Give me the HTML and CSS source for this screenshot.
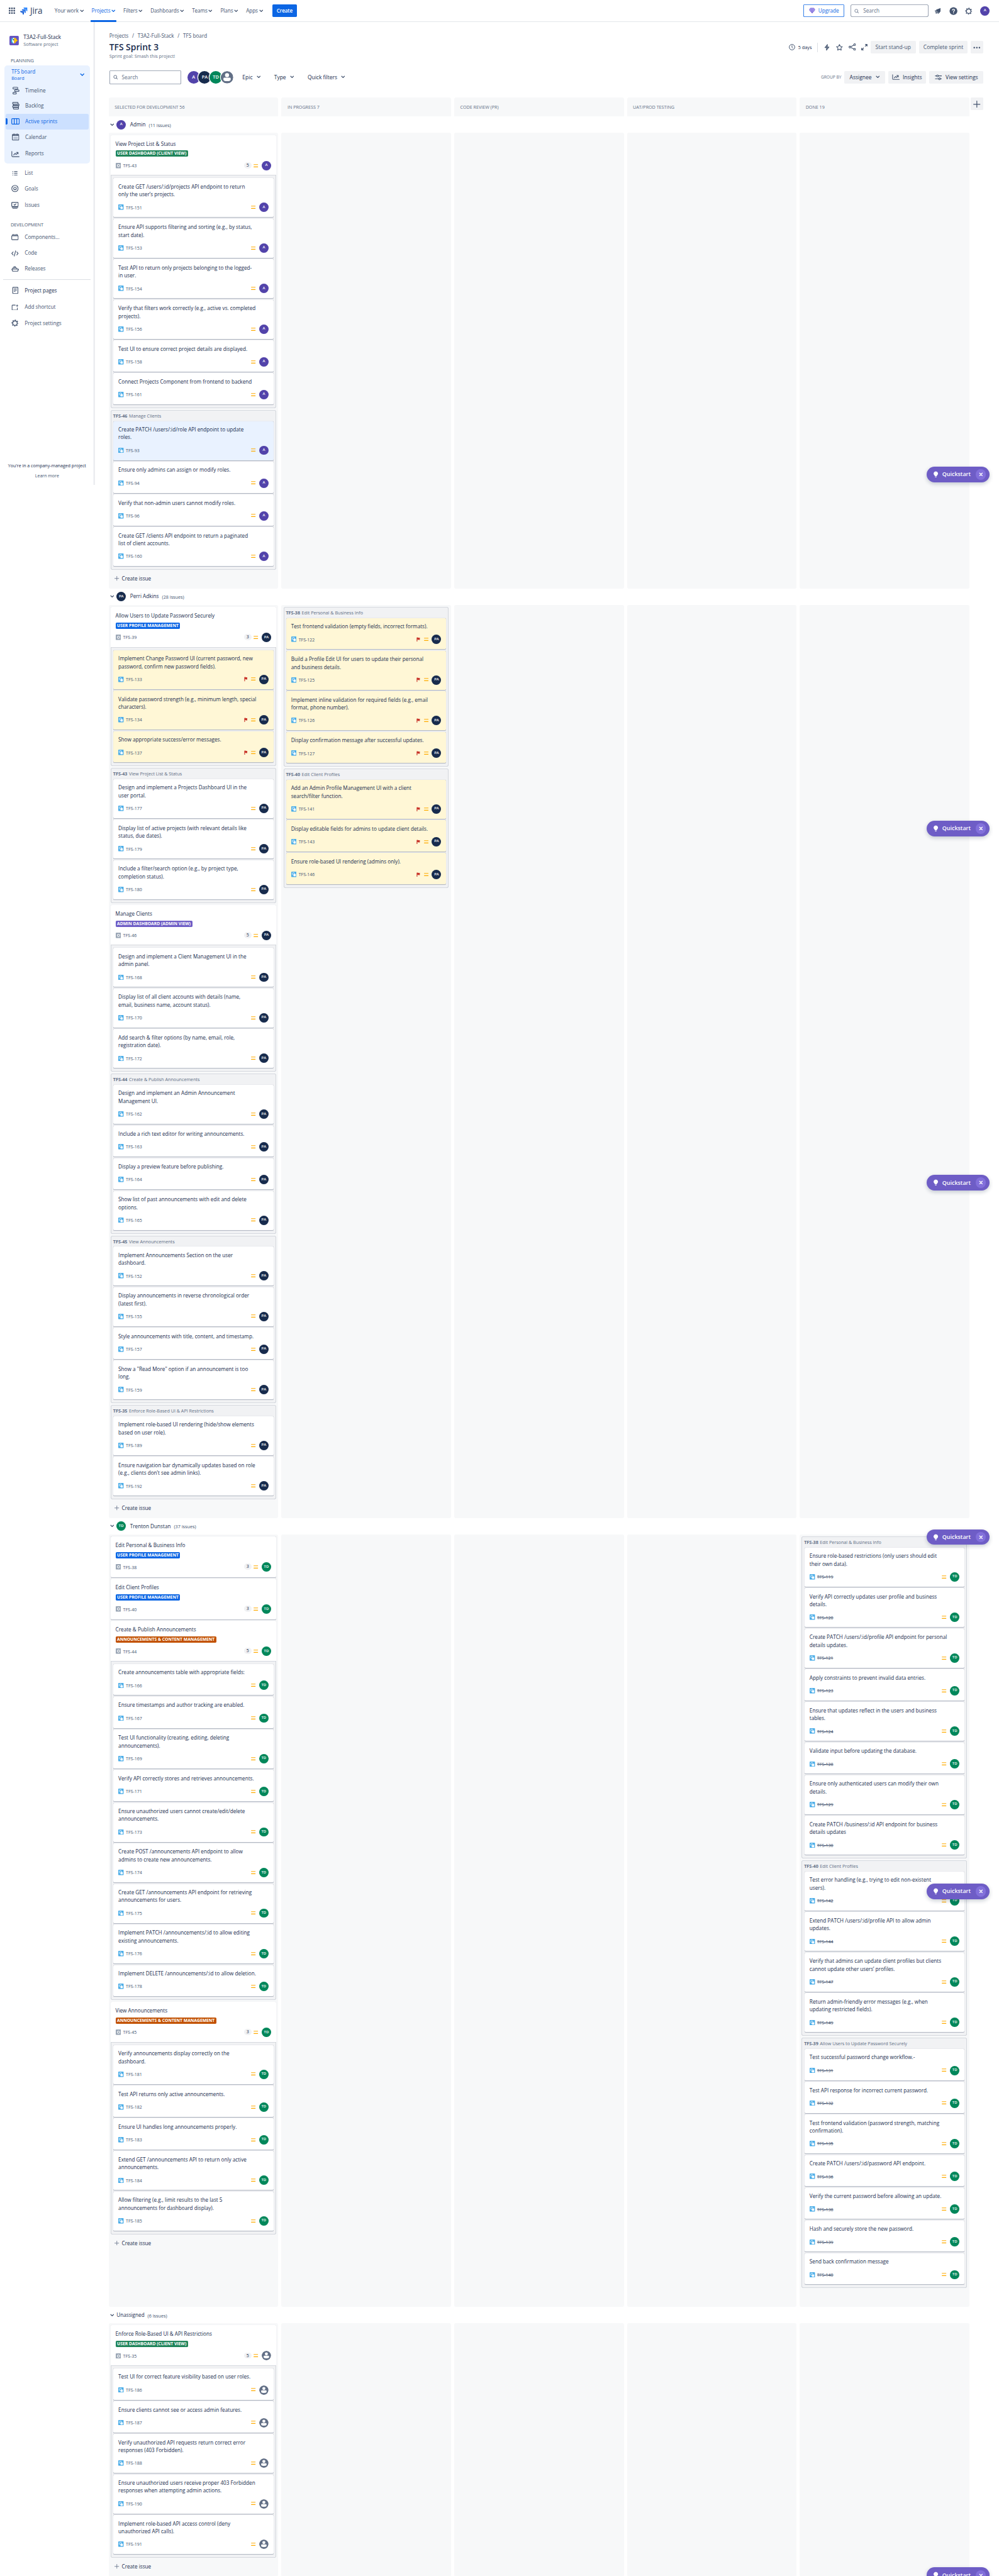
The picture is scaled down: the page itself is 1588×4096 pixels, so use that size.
FILE: index.html
```html
<!DOCTYPE html>
<html lang="en">
<head>
<meta charset="utf-8">
<title>TFS board - Active sprints - Jira</title>
<link rel="stylesheet" href="styles.css">
</head>
<body>
<svg class="sprite" aria-hidden="true">
  <symbol id="i-grid" viewBox="0 0 12 12"><g fill="currentColor"><rect width="3" height="3" rx=".7"/><rect x="4.5" width="3" height="3" rx=".7"/><rect x="9" width="3" height="3" rx=".7"/><rect y="4.5" width="3" height="3" rx=".7"/><rect x="4.5" y="4.5" width="3" height="3" rx=".7"/><rect x="9" y="4.5" width="3" height="3" rx=".7"/><rect y="9" width="3" height="3" rx=".7"/><rect x="4.5" y="9" width="3" height="3" rx=".7"/><rect x="9" y="9" width="3" height="3" rx=".7"/></g></symbol>
  <symbol id="i-jira" viewBox="0 0 14 14"><path fill="#2684ff" d="M6.6 0H14v7.2c-1.6 0-2.7-1.200-2.700-2.600V2.900H9.500C7.900 2.900 6.600 1.600 6.600 0z"/><path fill="#2271e8" d="M3.300 3.400h7.300v7.200c-1.600 0-2.700-1.200-2.700-2.700V6.200H6.200c-1.600 0-2.900-1.200-2.900-2.800z"/><path fill="#1d63d8" d="M0 6.800h7.300V14c-1.600 0-2.800-1.200-2.800-2.700V9.600H2.900C1.300 9.600 0 8.400 0 6.800z"/></symbol>
  <symbol id="i-chev" viewBox="0 0 8 8"><path d="M1.300 2.700 4 5.300l2.700-2.600" fill="none" stroke="currentColor" stroke-width="1.500" stroke-linecap="round" stroke-linejoin="round"/></symbol>
  <symbol id="i-gem" viewBox="0 0 12 12"><path d="M2.600 1.200h6.800L11.300 4.500 6 10.900.7 4.500z" fill="#b8acf6" stroke="#8270db" stroke-width="1.200" stroke-linejoin="round"/><path d="M.7 4.500h10.600M4 1.200v3.300L6 10.500l2-6V1.200M2 7h8M6 1.200v9.300" fill="none" stroke="#8270db" stroke-width=".8"/></symbol>
  <symbol id="i-search" viewBox="0 0 12 12"><circle cx="5.200" cy="5.200" r="3.900" fill="none" stroke="currentColor" stroke-width="1.300"/><path d="m8.200 8.200 3 3" stroke="currentColor" stroke-width="1.400" stroke-linecap="round"/></symbol>
  <symbol id="i-bell" viewBox="0 0 12 12"><path d="M11.300.8c.5 2.200.6 4.600-.5 6.700L8.300 10.800 1.500 5.500C3.300 2.900 7.500 3 11.300.8z" fill="currentColor"/><path d="M.4 6.300 6.900 11.200" stroke="currentColor" stroke-width="1.400" stroke-linecap="round"/><path d="M1.600 8.800a1.700 1.700 0 0 0 2.800 2.100z" fill="currentColor"/></symbol>
  <symbol id="i-help" viewBox="0 0 16 16"><circle cx="8" cy="8" r="7.500" fill="currentColor"/><path d="M5.900 6.300C5.900 5 6.900 4.300 8 4.300s2.200.7 2.200 1.900c0 1.500-2.100 1.600-2.100 3.100" fill="none" stroke="#fff" stroke-width="1.500" stroke-linecap="round"/><circle cx="8.100" cy="11.600" r="1" fill="#fff"/></symbol>
  <symbol id="i-gear" viewBox="0 0 14 14"><circle cx="7" cy="7" r="4.300" fill="none" stroke="currentColor" stroke-width="1.600"/><circle cx="7" cy="7" r="5.700" fill="none" stroke="currentColor" stroke-width="1.800" stroke-dasharray="2.100 2.377" stroke-dashoffset="1"/></symbol>
  <symbol id="i-clock" viewBox="0 0 12 12"><circle cx="6" cy="6" r="5.300" fill="none" stroke="currentColor" stroke-width="1.200"/><path d="M6 3v3.300l1.400 1.600" fill="none" stroke="currentColor" stroke-width="1.200" stroke-linecap="round"/></symbol>
  <symbol id="i-bolt" viewBox="0 0 10 12"><path d="M5.800.7 1.200 6.400h3.200L4 11.300l4.800-5.900H5.500z" fill="currentColor" fill-opacity=".75" stroke="currentColor" stroke-width="1.100" stroke-linejoin="round"/></symbol>
  <symbol id="i-star" viewBox="0 0 12 12"><path d="m6 .9 1.600 3.300 3.600.5-2.600 2.500.6 3.600L6 9.100l-3.200 1.700.6-3.600L.8 4.700l3.600-.5z" fill="none" stroke="currentColor" stroke-width="1.200" stroke-linejoin="round"/></symbol>
  <symbol id="i-share" viewBox="0 0 13 13"><g fill="none" stroke="currentColor" stroke-width="1.300"><circle cx="2.300" cy="6.500" r="1.600"/><circle cx="10.700" cy="2.300" r="1.600"/><circle cx="10.700" cy="10.700" r="1.600"/><path d="m3.800 5.800 5.400-2.700M3.800 7.200l5.400 2.700"/></g></symbol>
  <symbol id="i-expand" viewBox="0 0 12 12"><g fill="none" stroke="currentColor" stroke-width="1.500" stroke-linejoin="round"><path d="M7.500.8h3.700v3.700M11 1 7.300 4.700M4.500 11.200H.8V7.500M1 11l3.700-3.700"/></g></symbol>
  <symbol id="i-dots" viewBox="0 0 14 4"><g fill="currentColor"><circle cx="2" cy="2" r="1.500"/><circle cx="7" cy="2" r="1.500"/><circle cx="12" cy="2" r="1.500"/></g></symbol>
  <symbol id="i-chart" viewBox="0 0 16 12"><g fill="none" stroke="currentColor" stroke-width="1.400" stroke-linecap="round" stroke-linejoin="round"><path d="M1 1v8.500q0 1.500 1.500 1.500H15"/><path d="m4.500 7.800 2.800-3 2 2 3.400-3.600M9.700 2.700h3.200v3.100"/></g></symbol>
  <symbol id="i-sliders" viewBox="0 0 14 12"><g fill="none" stroke="currentColor" stroke-width="1.300" stroke-linecap="round"><path d="M1 3.200h2.200M7 3.200h6M1 8.800h6M11 8.800h2"/><circle cx="5.100" cy="3.200" r="1.700"/><circle cx="9" cy="8.800" r="1.700"/></g></symbol>
  <symbol id="i-plus" viewBox="0 0 14 14"><path d="M7 .8v12.400M.8 7h12.400" stroke="currentColor" stroke-width="1.500" stroke-linecap="round"/></symbol>
  <symbol id="i-timeline" viewBox="0 0 16 16"><g fill="none" stroke="currentColor" stroke-width="1.500"><rect x="2" y="1" width="10" height="3.500" rx="1.700"/><rect x="5.500" y="6.200" width="9" height="3.500" rx="1.700"/><rect x="2" y="11.500" width="7" height="3.300" rx="1.600"/></g></symbol>
  <symbol id="i-backlog" viewBox="0 0 16 16"><g fill="none" stroke="currentColor" stroke-width="1.500"><rect x="1.500" y="1.200" width="11" height="3.400" rx="1"/><rect x="3" y="4.600" width="11.500" height="3.400" rx="1"/><rect x="1.500" y="8" width="12" height="3.400" rx="1"/><rect x="3" y="11.400" width="10.500" height="3.400" rx="1"/></g></symbol>
  <symbol id="i-board" viewBox="0 0 16 12"><g fill="none" stroke="currentColor" stroke-width="1.500"><rect x=".8" y=".8" width="14.400" height="10.400" rx="1.500"/><path d="M5.600 1v10M10.400 1v10"/></g></symbol>
  <symbol id="i-calendar" viewBox="0 0 14 14"><rect x=".8" y="2" width="12.400" height="11.200" rx="1.200" fill="none" stroke="currentColor" stroke-width="1.400"/><path d="M1 4h12M4 .5v2.500M10 .5v2.500" stroke="currentColor" stroke-width="1.600"/><path d="M3.500 7.600h1.600m1.100 0h1.600m1.100 0h1.600M3.500 10.500h1.600m1.100 0h1.600m1.100 0h1.600" stroke="currentColor" stroke-width="1.300"/></symbol>
  <symbol id="i-list" viewBox="0 0 12 12"><path d="M1 2.500h1.500M4.500 2.500h7M1 6h1.500M4.500 6h7M1 9.500h1.500M4.500 9.500h7" stroke="currentColor" stroke-width="1.400"/></symbol>
  <symbol id="i-goal" viewBox="0 0 14 14"><g fill="none" stroke="currentColor" stroke-width="1.400"><circle cx="7" cy="7" r="6.100"/><circle cx="7" cy="7" r="2.500"/></g></symbol>
  <symbol id="i-issues" viewBox="0 0 14 14"><g fill="none" stroke="currentColor" stroke-width="1.500"><rect x=".8" y="1" width="12.400" height="7.800" rx="1"/><path d="m4.800 4.800 1.700 1.500 2.800-2.800M1 10.800h12M2.500 13.100h9" stroke-width="1.400"/></g></symbol>
  <symbol id="i-comp" viewBox="0 0 14 12"><g fill="none" stroke="currentColor" stroke-width="1.400"><rect x=".8" y="3.500" width="12.400" height="7.600" rx="1"/><path d="M2.500 3.500V1.200h3.200v2.300M8.300 3.500V1.200h3.200v2.300"/></g></symbol>
  <symbol id="i-code" viewBox="0 0 14 12"><path d="M3.500 3.200.9 6l2.600 2.800M10.500 3.200 13.100 6l-2.600 2.800M8.200 1 5.800 11" fill="none" stroke="currentColor" stroke-width="1.400" stroke-linecap="round" stroke-linejoin="round"/></symbol>
  <symbol id="i-ship" viewBox="0 0 15 11"><g fill="none" stroke="currentColor" stroke-width="1.400" stroke-linejoin="round"><path d="M1 6h13l-1.800 4H2.600zM2.800 6V3.600h7.400L11.500 6M5 3.400V1.200h2.800v2.200"/></g></symbol>
  <symbol id="i-page" viewBox="0 0 12 14"><rect x="1" y="1" width="10" height="12" rx="1" fill="none" stroke="currentColor" stroke-width="1.400"/><path d="M3.300 4.200h5.400M3.300 6.600h5.400M3.300 9h3" stroke="currentColor" stroke-width="1.200"/></symbol>
  <symbol id="i-shortcut" viewBox="0 0 14 13"><path d="M8 1.500H2q-1 0-1 1V11q0 1 1 1h9q1 0 1-1V7" fill="none" stroke="currentColor" stroke-width="1.400"/><path d="M11.500.5v4.400M9.300 2.700h4.400" stroke="currentColor" stroke-width="1.300"/></symbol>
  <symbol id="i-project" viewBox="0 0 18 18"><rect width="18" height="18" rx="2" fill="#6554c0"/><path d="M9 3.500a5.500 5.500 0 0 0 0 11z" fill="#fff"/><path d="M8 3.600a5.500 5.500 0 0 0 0 10.800A8 8 0 0 1 5 9a8 8 0 0 1 3-5.400z" fill="#00b8d9"/><path d="M9 3.500c3 0 4.600 1.800 5 4.200l2.200 1.600L13 11c-.7 2.300-2.200 3.500-4 3.500z" fill="#ffc400"/><circle cx="7.700" cy="7.700" r="1.200" fill="#253858"/></symbol>
  <symbol id="i-story" viewBox="0 0 10 10"><rect width="10" height="10" rx="1" fill="#9aa6b5"/><circle cx="5" cy="5" r="2.200" fill="none" stroke="#fff" stroke-width="1.200"/></symbol>
  <symbol id="i-sub" viewBox="0 0 10 10"><rect width="10" height="10" rx="1" fill="#4bade8"/><rect x="2.100" y="2.100" width="3.800" height="3.800" rx=".5" fill="none" stroke="#fff" stroke-width=".9"/><rect x="4.200" y="4.200" width="4.100" height="4.100" rx=".5" fill="#fff"/></symbol>
  <symbol id="i-prio" viewBox="0 0 9 9"><path d="M.2 2.100h8.600M.2 6.500h8.600" stroke="#ffab00" stroke-width="1.300"/></symbol>
  <symbol id="i-flag" viewBox="0 0 7 9"><path d="M.4 1q1.600-.7 3 0t3.200 0v4.200q-1.600.7-3 0-.9-.4-1.800-.1V9H.4z" fill="#c9372c"/></symbol>
  <symbol id="i-person" viewBox="0 0 24 24"><circle cx="12" cy="12" r="12" fill="#626f86"/><circle cx="12" cy="7.800" r="3.900" fill="#fff"/><path d="M5 14.500q0-1.800 1.800-1.800h10.400q1.800 0 1.800 1.800v1.700q0 3-7 3.200-7-.2-7-3.200z" fill="#fff"/></symbol>
  <symbol id="i-bulb" viewBox="0 0 12 14"><path d="M6 .6a4.700 4.700 0 0 0-2.600 8.600q.5.400.6 1.200h4q.1-.8.600-1.200A4.700 4.700 0 0 0 6 .6zM4.200 11.400h3.600v.8q0 1-1.800 1t-1.800-1z" fill="#fff"/></symbol>
  <symbol id="i-close" viewBox="0 0 8 8"><path d="m1.500 1.500 5 5m0-5-5 5" stroke="#fff" stroke-width="1.600" stroke-linecap="round"/></symbol>
</svg>

<div class="app">
  <header class="topbar">
    <svg class="ic-switch"><use href="#i-grid"/></svg>
    <a class="brand"><svg><use href="#i-jira"/></svg>Jira</a>
    <nav class="topnav">
      <a>Your work<svg><use href="#i-chev"/></svg></a>
      <a class="is-current">Projects<svg><use href="#i-chev"/></svg></a>
      <a>Filters<svg><use href="#i-chev"/></svg></a>
      <a>Dashboards<svg><use href="#i-chev"/></svg></a>
      <a>Teams<svg><use href="#i-chev"/></svg></a>
      <a>Plans<svg><use href="#i-chev"/></svg></a>
      <a>Apps<svg><use href="#i-chev"/></svg></a>
    </nav>
    <button class="create">Create</button>
    <div class="topright">
      <button class="upgrade"><svg><use href="#i-gem"/></svg>Upgrade</button>
      <div class="topsearch"><svg><use href="#i-search"/></svg>Search</div>
      <svg class="ic-bell"><use href="#i-bell"/></svg>
      <svg class="ic-help"><use href="#i-help"/></svg>
      <svg class="ic-gear"><use href="#i-gear"/></svg>
      <span class="avatar a">A</span>
    </div>
  </header>

  <div class="body">
    <aside class="sidebar">
      <div class="project">
        <svg><use href="#i-project"/></svg>
        <div><b>T3A2-Full-Stack</b><span>Software project</span></div>
      </div>
      <h3 class="planning">PLANNING</h3>
      <div class="panel">
        <div class="panel-head"><div><b>TFS board</b><span>Board</span></div><svg><use href="#i-chev"/></svg></div>
        <a class="item"><i><svg class="s15"><use href="#i-timeline"/></svg></i>Timeline</a>
        <a class="item"><i><svg class="s15"><use href="#i-backlog"/></svg></i>Backlog</a>
        <a class="item active"><i><svg class="s16x12"><use href="#i-board"/></svg></i>Active sprints</a>
        <a class="item"><i><svg><use href="#i-calendar"/></svg></i>Calendar</a>
        <a class="item sp2"><i><svg class="s16x12"><use href="#i-chart"/></svg></i>Reports</a>
      </div>
      <a class="item out sp3"><i><svg class="s11"><use href="#i-list"/></svg></i>List</a>
      <a class="item out"><i><svg><use href="#i-goal"/></svg></i>Goals</a>
      <a class="item out sp2"><i><svg><use href="#i-issues"/></svg></i>Issues</a>
      <h3 class="dev">DEVELOPMENT</h3>
      <a class="item out sp2"><i><svg class="s14x12"><use href="#i-comp"/></svg></i>Components...</a>
      <a class="item out sp1"><i><svg class="s14x12"><use href="#i-code"/></svg></i>Code</a>
      <a class="item out"><i><svg class="s15x11"><use href="#i-ship"/></svg></i>Releases</a>
      <hr>
      <a class="item out dark"><i><svg class="s12x15"><use href="#i-page"/></svg></i>Project pages</a>
      <a class="item out sp2"><i><svg class="s14x12"><use href="#i-shortcut"/></svg></i>Add shortcut</a>
      <a class="item out sp1"><i><svg><use href="#i-gear"/></svg></i>Project settings</a>
      <div class="side-foot"><p>You're in a company-managed project</p><a>Learn more</a></div>
    </aside>

    <main>
      <div class="heading">
        <div>
          <div class="crumbs"><span>Projects</span><span>/</span><span>T3A2-Full-Stack</span><span>/</span><span>TFS board</span></div>
          <h1>TFS Sprint 3</h1>
          <p class="goal">Sprint goal: Smash this project!</p>
        </div>
        <div class="actions">
          <svg class="w12"><use href="#i-clock"/></svg><span class="days">5 days</span><span class="vr"></span>
          <svg class="bolt"><use href="#i-bolt"/></svg><svg class="w13"><use href="#i-star"/></svg><svg class="w14"><use href="#i-share"/></svg><svg class="w12 expand"><use href="#i-expand"/></svg>
          <button class="btn standup">Start stand-up</button><button class="btn complete">Complete sprint</button><button class="btn more"><svg><use href="#i-dots"/></svg></button>
        </div>
      </div>
      <div class="toolbar">
        <div class="search"><svg><use href="#i-search"/></svg>Search</div>
        <div class="people"><span class="avatar a">A</span><span class="avatar pa">PA</span><span class="avatar td">TD</span><svg class="avatar"><use href="#i-person"/></svg></div>
        <span class="filter">Epic<svg><use href="#i-chev"/></svg></span>
        <span class="filter">Type<svg><use href="#i-chev"/></svg></span>
        <span class="filter">Quick filters<svg><use href="#i-chev"/></svg></span>
        <div class="tools">
          <span class="groupby">GROUP BY</span>
          <button class="btn assignee">Assignee<svg><use href="#i-chev"/></svg></button>
          <button class="btn insights"><svg><use href="#i-chart"/></svg>Insights</button>
          <button class="btn settings"><svg><use href="#i-sliders"/></svg>View settings</button>
        </div>
      </div>
      <div class="board-head">
        <div class="cols">
          <div class="col-title">SELECTED FOR DEVELOPMENT 56</div>
          <div class="col-title">IN PROGRESS 7</div>
          <div class="col-title">CODE REVIEW (PR)</div>
          <div class="col-title">UAT/PROD TESTING</div>
          <div class="col-title">DONE 19</div>
        </div>
        <button class="btn addcol"><svg><use href="#i-plus"/></svg></button>
      </div>
      <div id="lanes"></div>
    </main>
  </div>

  <div class="quick q1"></div><div class="quick q2"></div><div class="quick q3"></div><div class="quick q4"></div><div class="quick q5"></div><div class="quick q6"></div>
</div>
<script src="board.js"></script>
</body>
</html>
```
FILE: styles.css
```css
* { box-sizing: border-box; }
body { margin: 0; background: #fff; overflow: hidden; }
.sprite { position: absolute; width: 0; height: 0; }
svg { display: block; flex: none; }
p, h1, h3 { margin: 0; }
button { border: 0; padding: 0; margin: 0; font: inherit; color: inherit; }

.app {
  position: relative;
  zoom: 0.82708;
  width: 1920px;
  height: 4953px;
  overflow: hidden;
  background: #fff;
  color: #172b4d;
  font: 9.9px/15px "Open Sans", "Noto Sans", sans-serif;
}

/* top navigation */
.topbar {
  display: flex;
  align-items: center;
  height: 42px;
  padding: 0 18px 0 17px;
  box-shadow: inset 0 -1px #dcdfe4;
  color: #44546f;
}
.ic-switch { width: 12px; height: 12px; }
.brand { display: flex; align-items: center; gap: 5px; width: 66px; margin-left: 10px; font-size: 16.5px; font-weight: 500; letter-spacing: -.2px; color: #344563; }
.brand svg { width: 14px; height: 14px; }
.topnav { display: flex; gap: 15px; height: 42px; }
.topnav a { display: flex; align-items: center; gap: 2px; font-weight: 500; letter-spacing: -.1px; }
.topnav svg { width: 8px; height: 8px; margin-top: 1px; }
.topnav .is-current { position: relative; color: #0c66e4; }
.topnav .is-current::after { content: ""; position: absolute; left: -2px; right: -2px; bottom: 0; height: 3px; border-radius: 1px; background: #0c66e4; }
.create { width: 48px; height: 24px; margin-left: 17.500px; border-radius: 2px; background: #0c66e4; color: #fff; font-weight: 600; letter-spacing: -.2px; }
.topright { display: flex; align-items: center; margin-left: auto; }
.upgrade { display: flex; align-items: center; justify-content: center; gap: 6px; width: 79px; height: 24px; border-radius: 2px; background: #fff; box-shadow: inset 0 0 0 1px #0c66e4; color: #0c66e4; font-weight: 500; }
.upgrade svg { width: 12px; height: 12px; }
.topsearch { display: flex; align-items: center; gap: 8px; width: 150px; height: 24px; margin: 0 11px 0 12px; padding-left: 7px; border-radius: 4px; box-shadow: inset 0 0 0 1px #8590a2; color: #626f86; }
.topsearch svg { width: 9px; height: 9px; }
.ic-bell { width: 12px; height: 12px; margin-right: 16px; }
.ic-help { width: 16px; height: 16px; margin-right: 15px; }
.ic-gear { width: 14px; height: 14px; margin-right: 15px; }

.avatar { display: flex; flex: none; align-items: center; justify-content: center; width: 18px; height: 18px; border-radius: 50%; color: #fff; font-size: 7.200px; font-weight: 600; line-height: 1; }
.avatar.a { background: #5243aa; }
.avatar.pa { background: #172b4d; }
.avatar.td { background: #00875a; }

.body { display: flex; align-items: flex-start; }

/* project sidebar */
.sidebar { display: flex; flex-direction: column; width: 182px; height: 890px; padding: 27px 9px 0 8px; box-shadow: inset -3px 0 #ebecf0; color: #44546f; }
.project { display: flex; gap: 9px; height: 18px; align-items: center; margin-left: 10px; }
.project svg { width: 18px; height: 18px; }
.project b, .project span { display: block; line-height: 13px; white-space: nowrap; }
.project b { color: #172b4d; font-weight: 500; font-size: 10.250px; }
.project span { color: #626f86; font-size: 8.750px; }
.sidebar h3 { height: 15px; margin-left: 12.500px; font-size: 8.900px; font-weight: 500; }
.sidebar .planning { margin-top: 22px; margin-bottom: 2px; }
.sidebar .dev { margin-top: 14px; }
.panel { height: 189px; padding: 0 3px; border-radius: 6px; background: #e9f2ff; }
.panel-head { display: flex; justify-content: space-between; align-items: center; height: 33px; padding: 4px 8px 0 11px; color: #0c66e4; }
.panel-head b, .panel-head span { display: block; font-weight: 400; line-height: 14px; }
.panel-head span { font-size: 8.750px; }
.panel-head svg { width: 9px; height: 9px; margin-bottom: 2px; }
.item { position: relative; display: flex; align-items: center; flex: none; height: 30px; padding-left: 11px; border-radius: 3px; white-space: nowrap; }
.item i { display: flex; align-items: center; justify-content: center; width: 16px; margin-right: 10.500px; }
.item svg { width: 14px; height: 14px; }
.item svg.s15 { width: 15px; height: 15px; }
.item svg.s11 { width: 11px; height: 11px; }
.item svg.s16x12 { width: 16px; height: 12px; }
.item svg.s14x12 { width: 14px; height: 12px; }
.item svg.s15x11 { width: 15px; height: 11px; }
.item svg.s12x15 { width: 13px; height: 14px; }
.item.active { background: #cce0ff; color: #0c66e4; }
.item.active::before { content: ""; position: absolute; left: 0; top: 9px; width: 3px; height: 12px; border-radius: 0 2px 2px 0; background: #0c66e4; }
.item.out { padding-left: 13px; }
.item.dark { color: #172b4d; }
.dark svg { color: #44546f; }
.sp1 { margin-top: 1px; }
.sp2 { margin-top: 2px; }
.sp3 { margin-top: 3px; }
.sidebar hr { width: 168px; height: 1px; margin: 5px 0 6px -2px; border: 0; background: #dcdfe4; flex: none; }
.side-foot { margin-top: auto; padding-bottom: 10px; text-align: center; font-size: 8.500px; color: #44546f; white-space: nowrap; }
.side-foot p { margin-bottom: 5px; color: #172b4d; }

/* page heading */
main { width: 1738px; padding: 19.500px 30px 0 27px; }
.heading { display: flex; justify-content: space-between; padding-left: 1px; }
.crumbs { display: flex; gap: 7px; color: #44546f; }
h1 { height: 22px; margin-top: 3.500px; font-size: 16.800px; line-height: 22px; font-weight: 600; }
.goal { height: 14px; font-size: 8.800px; line-height: 14px; color: #626f86; }
.actions { display: flex; align-items: center; height: 24px; margin-top: 17.500px; color: #44546f; }
.days { margin-left: 6px; width: 26px; font-size: 8.750px; color: #172b4d; white-space: nowrap; }
.vr { width: 1px; height: 18px; margin: 0 12px 0 11px; background: #dcdfe4; }
.w12 { width: 12px; height: 12px; }
.w13 { width: 13px; height: 13px; margin: 0 11px 0 12px; }
.w14 { width: 14px; height: 14px; }
.bolt { width: 11px; height: 13px; }
.expand { margin: 0 6px 0 10px; }
.btn { display: flex; align-items: center; justify-content: center; height: 24px; border-radius: 2px; background: #f1f2f4; font-size: 10.250px; font-weight: 500; white-space: nowrap; }
.btn svg { color: #44546f; }
.standup { width: 87px; }
.complete { width: 94px; margin: 0 6px; }
.more { width: 24px; }
.more svg { width: 14px; height: 4px; }

.toolbar { display: flex; align-items: center; height: 27px; margin-top: 19px; padding-left: 1px; font-size: 10.250px; font-weight: 500; }
.search { display: flex; align-items: center; gap: 7px; width: 138px; height: 27px; padding-left: 8px; border-radius: 2px; box-shadow: inset 0 0 0 1px #8590a2; color: #626f86; font-weight: 400; font-size: 9.900px; }
.search svg { width: 9px; height: 9px; color: #44546f; }
.people { display: flex; width: 107px; padding-left: 12px; }
.people .avatar { width: 24px; height: 24px; margin-right: -2.500px; font-size: 9px; box-shadow: 0 0 0 1.500px #fff; }
.filter { display: flex; align-items: center; margin-right: 26px; gap: 7.500px; }
.filter svg { width: 8px; height: 8px; color: #44546f; }
.filter:nth-of-type(1) { margin-left: 11px; }
.tools { display: flex; align-items: center; gap: 6px; margin-left: auto; }
.groupby { font-size: 8px; font-weight: 400; color: #626f86; }
.assignee { width: 78px; gap: 8px; }
.assignee svg { width: 8px; height: 8px; }
.insights { width: 73px; gap: 5px; }
.insights svg { width: 15px; height: 11px; }
.settings { width: 104px; gap: 7px; }
.settings svg { width: 14px; height: 12px; }

/* board */
.board-head { display: flex; gap: 3px; margin-top: 26px; }
.cols { display: grid; flex: none; grid-template-columns: repeat(5, 326px); gap: 6px; }
.col-title { height: 36px; padding: 1px 11.500px 0; border-radius: 4px 4px 0 0; background: #f7f8f9; color: #626f86; font-size: 8.650px; line-height: 36px; }
.addcol { width: 24px; }
.addcol svg { width: 14px; height: 14px; }

.lane-head { display: flex; align-items: center; height: 31.500px; padding-left: 2.500px; }
.lane-head .chev { width: 8px; height: 8px; margin-right: 4.500px; color: #44546f; }
.lane-head .avatar { margin-right: 8px; }
.lane-head small { margin: 2px 0 0 6px; font-size: 8.800px; color: #44546f; }
.col { padding: 4.250px 4.500px 0 4px; border-radius: 3px; background: #f7f8f9; }
.col:last-child .sub { margin-left: 5.500px; }
.col-foot { display: flex; align-items: center; gap: 4.500px; height: 35.600px; padding: 0 0 2px 7.500px; font-weight: 500; }
.col-foot svg { width: 9px; height: 9px; color: #626f86; }

.card { border-radius: 2px; background: #fff; box-shadow: 0 1px 1px rgba(9, 30, 66, .28), 0 0 1px rgba(9, 30, 66, .2); }
.parent { height: 77.750px; padding: 9.400px 9.500px 0 9px; }
.parent.solo { margin-bottom: 3.250px; }
.parent.open { height: 76.750px; border-radius: 2px 2px 0 0; box-shadow: 0 0 1px rgba(9, 30, 66, .2); }
.group { height: auto; margin-bottom: 3.750px; padding-bottom: 4.200px; border-radius: 4px; background: #f1f2f4; box-shadow: inset 0 0 0 1px #cdd1d8; }
.group.under { padding-top: 6.200px; border-radius: 0 0 4px 4px; }
.group:nth-last-child(2) { margin-bottom: 0; }
.group-head { height: 21.200px; padding: 1px 4.500px 0; font-size: 8.700px; line-height: 21px; color: #626f86; white-space: nowrap; }
.group-head b { margin-right: 3px; font-weight: 700; }
.epic { display: block; width: max-content; height: 12px; margin-top: 5.500px; padding: 0 3px; border-radius: 2px; color: #fff; font-size: 8.200px; font-weight: 700; line-height: 12px; white-space: nowrap; }
.epic.green { background: #1f845a; }
.epic.blue { background: #0c66e4; }
.epic.purple { background: #6e5dc6; }
.epic.orange { background: #c25100; }
.sub { height: 75px; margin: 0 5px 3px; padding: 9px 9.500px 0; }
.sub.short { height: 60px; }
.sub.flagged { background: #fff7d6; }
.sub.selected { background: #e9f2ff; }
.title { margin: 0; white-space: pre; }
.meta { display: flex; align-items: center; height: 18px; margin-top: 8.200px; }
.parent .meta { margin-top: 7.800px; }
.meta .type { width: 10.500px; height: 10.500px; }
.key { margin-left: 4px; margin-right: auto; font-size: 8.500px; color: #44546f; }
.done .key { text-decoration: line-through; }
.points { width: 14px; height: 12px; margin: -1px 4.500px 0 0; border-radius: 6px; background: #f1f2f4; font-size: 8.500px; line-height: 12px; text-align: center; }
.prio { width: 9px; height: 9px; margin-right: 6.500px; }
.flag { width: 7px; height: 9px; margin-right: 7px; }

/* floating help launcher */
.quick { position: absolute; left: 1781px; display: flex; align-items: center; width: 121px; height: 30px; padding-left: 12px; border-radius: 15px; background: #6e5dc6; box-shadow: 0 3px 8px rgba(9, 30, 66, .22); color: #fff; font-size: 10.800px; font-weight: 600; }
.quick .bulb { width: 11px; height: 13px; margin-right: 7px; }
.quick .x { display: flex; align-items: center; justify-content: center; width: 20px; height: 20px; margin-left: auto; margin-right: 7px; border-radius: 50%; background: #8270db; }
.quick .x svg { width: 8px; height: 8px; }
.q1 { top: 897px; }
.q2 { top: 1578px; }
.q3 { top: 2259px; }
.q4 { top: 2940px; }
.q5 { top: 3621px; }
.q6 { top: 4936px; }
```
FILE: board.js
```js
const icon = (id, cls) => `<svg class="${cls}"><use href="#i-${id}"/></svg>`;
const EPIC = {
  view: ['green', 'USER DASHBOARD (CLIENT VIEW)'],
  profile: ['blue', 'USER PROFILE MANAGEMENT'],
  admin: ['purple', 'ADMIN DASHBOARD (ADMIN VIEW)'],
  news: ['orange', 'ANNOUNCEMENTS & CONTENT MANAGEMENT'],
};
const esc = s => s.replace(/&/g, '&amp;');

/* Groups: p = parent card [key, title, epic, points], h = heading [key, title],
   c = sub-tasks [key, title, state]. */
const LANES = [
  { who: 'a', init: 'A', name: 'Admin', count: 11, cols: [[
    { p: [43, 'View Project List & Status', 'view', 5], c: [
      [151, 'Create GET /users/:id/projects API endpoint to return\nonly the user’s projects.'],
      [153, 'Ensure API supports filtering and sorting (e.g., by status,\nstart date).'],
      [154, 'Test API to return only projects belonging to the logged-\nin user.'],
      [156, 'Verify that filters work correctly (e.g., active vs. completed\nprojects).'],
      [158, 'Test UI to ensure correct project details are displayed.'],
      [161, 'Connect Projects Component from frontend to backend']] },
    { h: [46, 'Manage Clients'], c: [
      [93, 'Create PATCH /users/:id/role API endpoint to update\nroles.', 'selected'],
      [94, 'Ensure only admins can assign or modify roles.'],
      [96, 'Verify that non-admin users cannot modify roles.'],
      [160, 'Create GET /clients API endpoint to return a paginated\nlist of client accounts.']] },
  ], [], [], [], []] },
  { who: 'pa', init: 'PA', name: 'Perri Adkins', count: 28, cols: [[
    { p: [39, 'Allow Users to Update Password Securely', 'profile', 3], c: [
      [133, 'Implement Change Password UI (current password, new\npassword, confirm new password fields).', 'flagged'],
      [134, 'Validate password strength (e.g., minimum length, special\ncharacters).', 'flagged'],
      [137, 'Show appropriate success/error messages.', 'flagged']] },
    { h: [43, 'View Project List & Status'], c: [
      [177, 'Design and implement a Projects Dashboard UI in the\nuser portal.'],
      [179, 'Display list of active projects (with relevant details like\nstatus, due dates).'],
      [180, 'Include a filter/search option (e.g., by project type,\ncompletion status).']] },
    { p: [46, 'Manage Clients', 'admin', 5], c: [
      [168, 'Design and implement a Client Management UI in the\nadmin panel.'],
      [170, 'Display list of all client accounts with details (name,\nemail, business name, account status).'],
      [172, 'Add search & filter options (by name, email, role,\nregistration date).']] },
    { h: [44, 'Create & Publish Announcements'], c: [
      [162, 'Design and implement an Admin Announcement\nManagement UI.'],
      [163, 'Include a rich text editor for writing announcements.'],
      [164, 'Display a preview feature before publishing.'],
      [165, 'Show list of past announcements with edit and delete\noptions.']] },
    { h: [45, 'View Announcements'], c: [
      [152, 'Implement Announcements Section on the user\ndashboard.'],
      [155, 'Display announcements in reverse chronological order\n(latest first).'],
      [157, 'Style announcements with title, content, and timestamp.'],
      [159, 'Show a "Read More" option if an announcement is too\nlong.']] },
    { h: [35, 'Enforce Role-Based UI & API Restrictions'], c: [
      [189, 'Implement role-based UI rendering (hide/show elements\nbased on user role).'],
      [192, 'Ensure navigation bar dynamically updates based on role\n(e.g., clients don’t see admin links).']] },
  ], [
    { h: [38, 'Edit Personal & Business Info'], c: [
      [122, 'Test frontend validation (empty fields, incorrect formats).', 'flagged'],
      [125, 'Build a Profile Edit UI for users to update their personal\nand business details.', 'flagged'],
      [126, 'Implement inline validation for required fields (e.g., email\nformat, phone number).', 'flagged'],
      [127, 'Display confirmation message after successful updates.', 'flagged']] },
    { h: [40, 'Edit Client Profiles'], c: [
      [141, 'Add an Admin Profile Management UI with a client\nsearch/filter function.', 'flagged'],
      [143, 'Display editable fields for admins to update client details.', 'flagged'],
      [146, 'Ensure role-based UI rendering (admins only).', 'flagged']] },
  ], [], [], []] },
  { who: 'td', init: 'TD', name: 'Trenton Dunstan', count: 37, cols: [[
    { p: [38, 'Edit Personal & Business Info', 'profile', 3] },
    { p: [40, 'Edit Client Profiles', 'profile', 3] },
    { p: [44, 'Create & Publish Announcements', 'news', 5], c: [
      [166, 'Create announcements table with appropriate fields:'],
      [167, 'Ensure timestamps and author tracking are enabled.'],
      [169, 'Test UI functionality (creating, editing, deleting\nannouncements).'],
      [171, 'Verify API correctly stores and retrieves announcements.'],
      [173, 'Ensure unauthorized users cannot create/edit/delete\nannouncements.'],
      [174, 'Create POST /announcements API endpoint to allow\nadmins to create new announcements.'],
      [175, 'Create GET /announcements API endpoint for retrieving\nannouncements for users.'],
      [176, 'Implement PATCH /announcements/:id to allow editing\nexisting announcements.'],
      [178, 'Implement DELETE /announcements/:id to allow deletion.']] },
    { p: [45, 'View Announcements', 'news', 3], c: [
      [181, 'Verify announcements display correctly on the\ndashboard.'],
      [182, 'Test API returns only active announcements.'],
      [183, 'Ensure UI handles long announcements properly.'],
      [184, 'Extend GET /announcements API to return only active\nannouncements.'],
      [185, 'Allow filtering (e.g., limit results to the last 5\nannouncements for dashboard display).']] },
  ], [], [], [], [
    { h: [38, 'Edit Personal & Business Info'], c: [
      [119, 'Ensure role-based restrictions (only users should edit\ntheir own data).', 'done'],
      [120, 'Verify API correctly updates user profile and business\ndetails.', 'done'],
      [121, 'Create PATCH /users/:id/profile API endpoint for personal\ndetails updates.', 'done'],
      [123, 'Apply constraints to prevent invalid data entries.', 'done'],
      [124, 'Ensure that updates reflect in the users and business\ntables.', 'done'],
      [128, 'Validate input before updating the database.', 'done'],
      [129, 'Ensure only authenticated users can modify their own\ndetails.', 'done'],
      [130, 'Create PATCH /business/:id API endpoint for business\ndetails updates', 'done']] },
    { h: [40, 'Edit Client Profiles'], c: [
      [142, 'Test error handling (e.g., trying to edit non-existent\nusers).', 'done'],
      [144, 'Extend PATCH /users/:id/profile API to allow admin\nupdates.', 'done'],
      [147, 'Verify that admins can update client profiles but clients\ncannot update other users’ profiles.', 'done'],
      [149, 'Return admin-friendly error messages (e.g., when\nupdating restricted fields).', 'done']] },
    { h: [39, 'Allow Users to Update Password Securely'], c: [
      [131, 'Test successful password change workflow.-', 'done'],
      [132, 'Test API response for incorrect current password.', 'done'],
      [135, 'Test frontend validation (password strength, matching\nconfirmation).', 'done'],
      [136, 'Create PATCH /users/:id/password API endpoint.', 'done'],
      [138, 'Verify the current password before allowing an update.', 'done'],
      [139, 'Hash and securely store the new password.', 'done'],
      [140, 'Send back confirmation message', 'done']] },
  ]] },
  { who: '', name: 'Unassigned', count: 6, cols: [[
    { p: [35, 'Enforce Role-Based UI & API Restrictions', 'view', 5], c: [
      [186, 'Test UI for correct feature visibility based on user roles.'],
      [187, 'Ensure clients cannot see or access admin features.'],
      [188, 'Verify unauthorized API requests return correct error\nresponses (403 Forbidden).'],
      [190, 'Ensure unauthorized users receive proper 403 Forbidden\nresponses when attempting admin actions.'],
      [191, 'Implement role-based API access control (deny\nunauthorized API calls).']] },
  ], [], [], [], []] },
];

const avatar = l => l.who ? `<span class="avatar ${l.who}">${l.init}</span>` : icon('person', 'avatar');

function subCard(lane, [key, title, state = '']) {
  const short = title.includes('\n') ? '' : 'short';
  const flag = state === 'flagged' ? icon('flag', 'flag') : '';
  return `<article class="card sub ${short} ${state}"><p class="title">${esc(title)}</p>
    <div class="meta">${icon('sub', 'type')}<span class="key">TFS-${key}</span>${flag}${icon('prio', 'prio')}${avatar(lane)}</div></article>`;
}

function block(lane, b) {
  let html = '';
  if (b.p) {
    const [key, title, epic, pts] = b.p;
    html += `<article class="card parent ${b.c ? 'open' : 'solo'}"><p class="title">${esc(title)}</p>
      <span class="epic ${EPIC[epic][0]}">${esc(EPIC[epic][1])}</span>
      <div class="meta">${icon('story', 'type')}<span class="key">TFS-${key}</span><span class="points">${pts}</span>${icon('prio', 'prio')}${avatar(lane)}</div></article>`;
  }
  if (b.c) {
    const head = b.h ? `<div class="group-head"><b>TFS-${b.h[0]}</b>${esc(b.h[1])}</div>` : '';
    html += `<section class="group ${b.p ? 'under' : ''}">${head}${b.c.map(c => subCard(lane, c)).join('')}</section>`;
  }
  return html;
}

document.getElementById('lanes').innerHTML = LANES.map(l => `<section>
  <div class="lane-head">${icon('chev', 'chev')}${l.who ? avatar(l) : ''}<span>${l.name}</span><small>(${l.count} issues)</small></div>
  <div class="cols">${l.cols.map((c, i) => `<div class="col">${c.map(b => block(l, b)).join('')}
    ${c.length ? `<div class="col-foot">${i ? '' : icon('plus', '') + 'Create issue'}</div>` : ''}</div>`).join('')}</div>
</section>`).join('');

document.querySelectorAll('.quick').forEach(q => {
  q.innerHTML = `${icon('bulb', 'bulb')}Quickstart<span class="x">${icon('close', '')}</span>`;
});
```
